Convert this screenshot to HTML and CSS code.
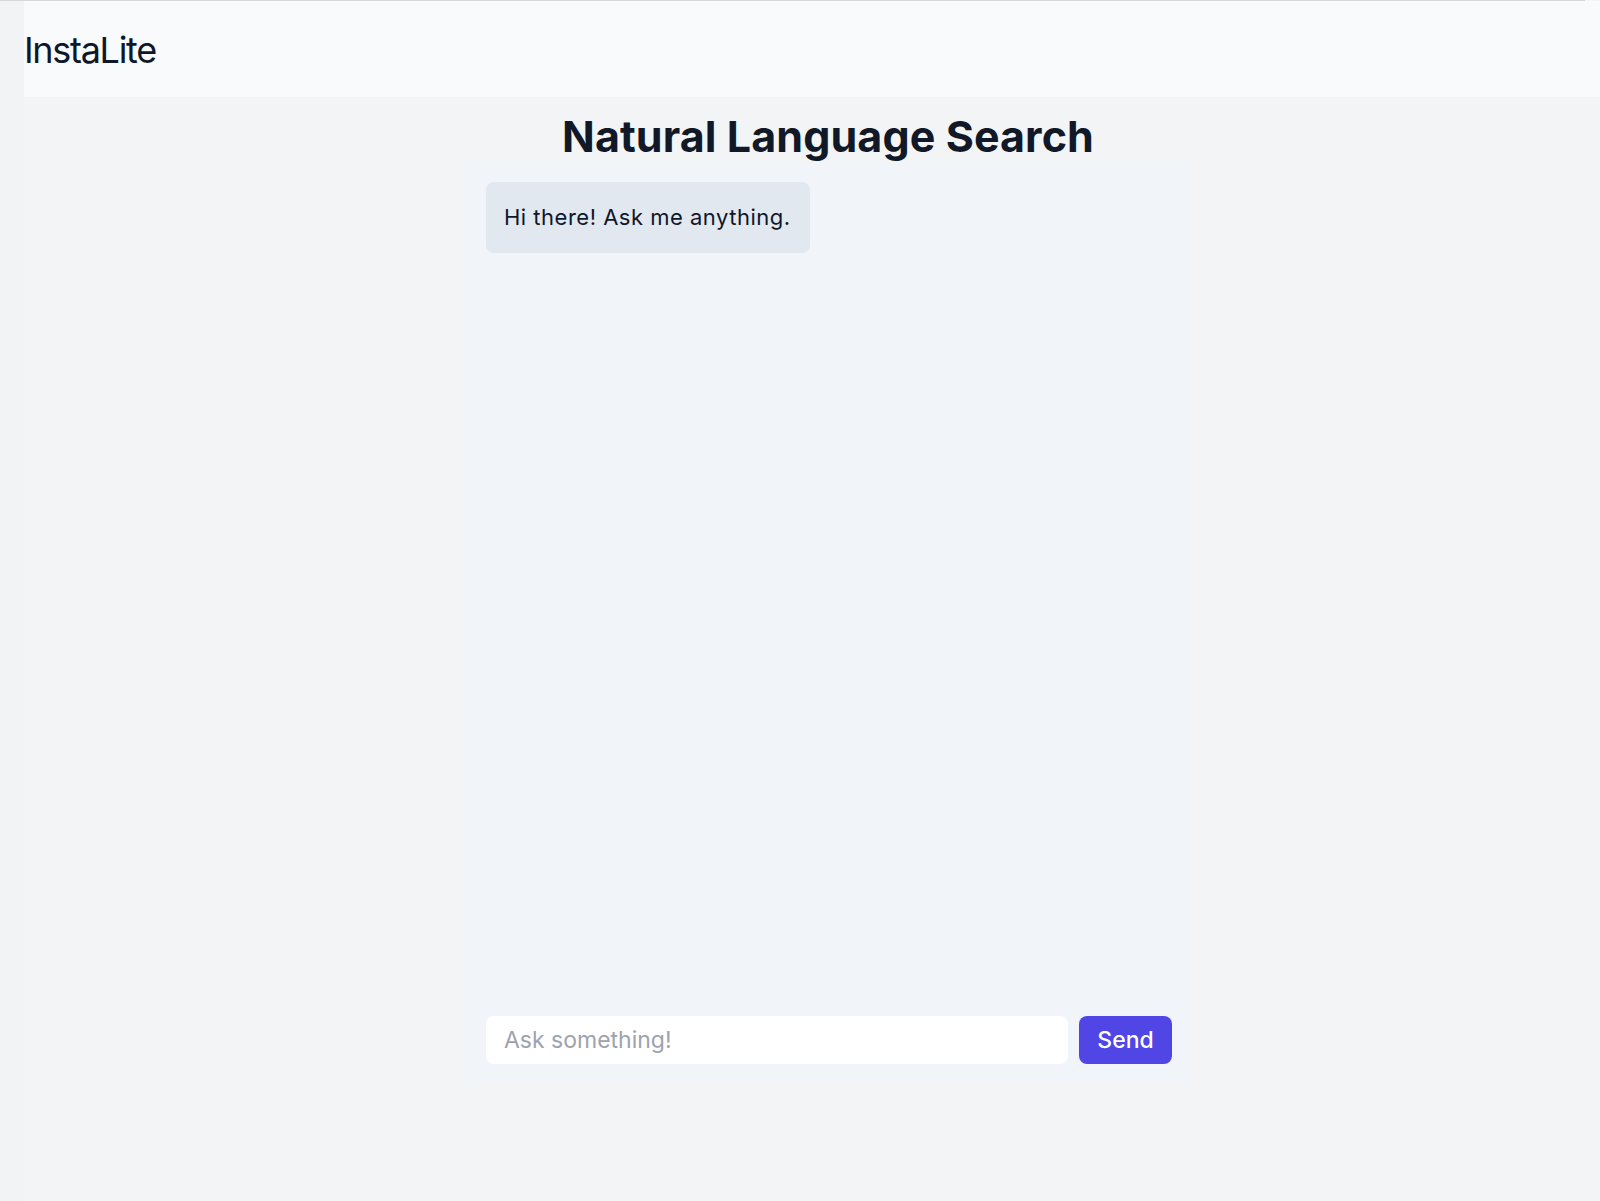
FILE: index.html
```html
<!DOCTYPE html>
<html lang="en">
<head>
<meta charset="utf-8">
<title>InstaLite</title>
<link rel="stylesheet" href="styles.css">
</head>
<body>
<div class="topline"></div>
<div class="app">
  <div class="rail"></div>
  <div class="main">
    <header class="header">InstaLite</header>
    <div class="content">
      <h1 class="title">Natural Language Search</h1>
      <section class="chat">
        <div class="messages">
          <div class="bubble">Hi there! Ask me anything.</div>
        </div>
        <form class="composer">
          <input class="ask" type="text" placeholder="Ask something!">
          <button class="send" type="button">Send</button>
        </form>
      </section>
    </div>
  </div>
</div>
</body>
</html>
```
FILE: styles.css
```css
html, body {
  margin: 0;
  padding: 0;
}
body {
  background: #f3f4f6;
  font-family: Inter, "Noto Sans", "Liberation Sans", sans-serif;
  color: #0f172a;
  height: 1201px;
  overflow: hidden;
}
.topline {
  height: 1px;
  background: #d5d7db;
  margin-right: 15px;
}
.app {
  display: flex;
  height: 1200px;
}
.rail {
  width: 24px;
  background: #f2f3f5;
}
.main {
  flex: 1;
  display: flex;
  flex-direction: column;
}
.header {
  height: 96px;
  box-sizing: border-box;
  padding-top: 2px;
  background: #f9fafb;
  display: flex;
  align-items: center;
  font-size: 36px;
  color: #0f172a;
  letter-spacing: -1.3px;
}
.content {
  padding-left: 32px;
}
.title {
  margin: 13px 0 0;
  text-align: center;
  font-size: 43px;
  font-weight: 700;
  line-height: 52px;
  color: #111827;
  letter-spacing: 0.1px;
}
.chat {
  width: 726px;
  margin: 0 auto;
  box-sizing: border-box;
  padding: 20px 19px 20px 21px;
  height: 922px;
  background: #f1f4f8;
  display: flex;
  flex-direction: column;
}
.messages {
  flex: 1;
  display: flex;
  flex-direction: column;
  align-items: flex-start;
}
.bubble {
  background: #e2e8f0;
  border-radius: 8px;
  padding: 18px 19px 18px 18px;
  font-size: 22px;
  line-height: 35px;
  letter-spacing: 0.5px;
  color: #0f172a;
}
.composer {
  display: flex;
  gap: 11px;
  margin: 0;
}
.ask {
  flex: 1;
  height: 48px;
  box-sizing: border-box;
  border: none;
  border-radius: 8px;
  background: #ffffff;
  padding: 0 18px;
  font-family: inherit;
  font-size: 23px;
  color: #111827;
  outline: none;
}
.ask::placeholder {
  color: #9ca3af;
}
.send {
  width: 93px;
  height: 48px;
  border: none;
  border-radius: 8px;
  background: #4f46e5;
  color: #ffffff;
  font-family: inherit;
  font-size: 23px;
  font-weight: 500;
  padding: 0;
}
```
